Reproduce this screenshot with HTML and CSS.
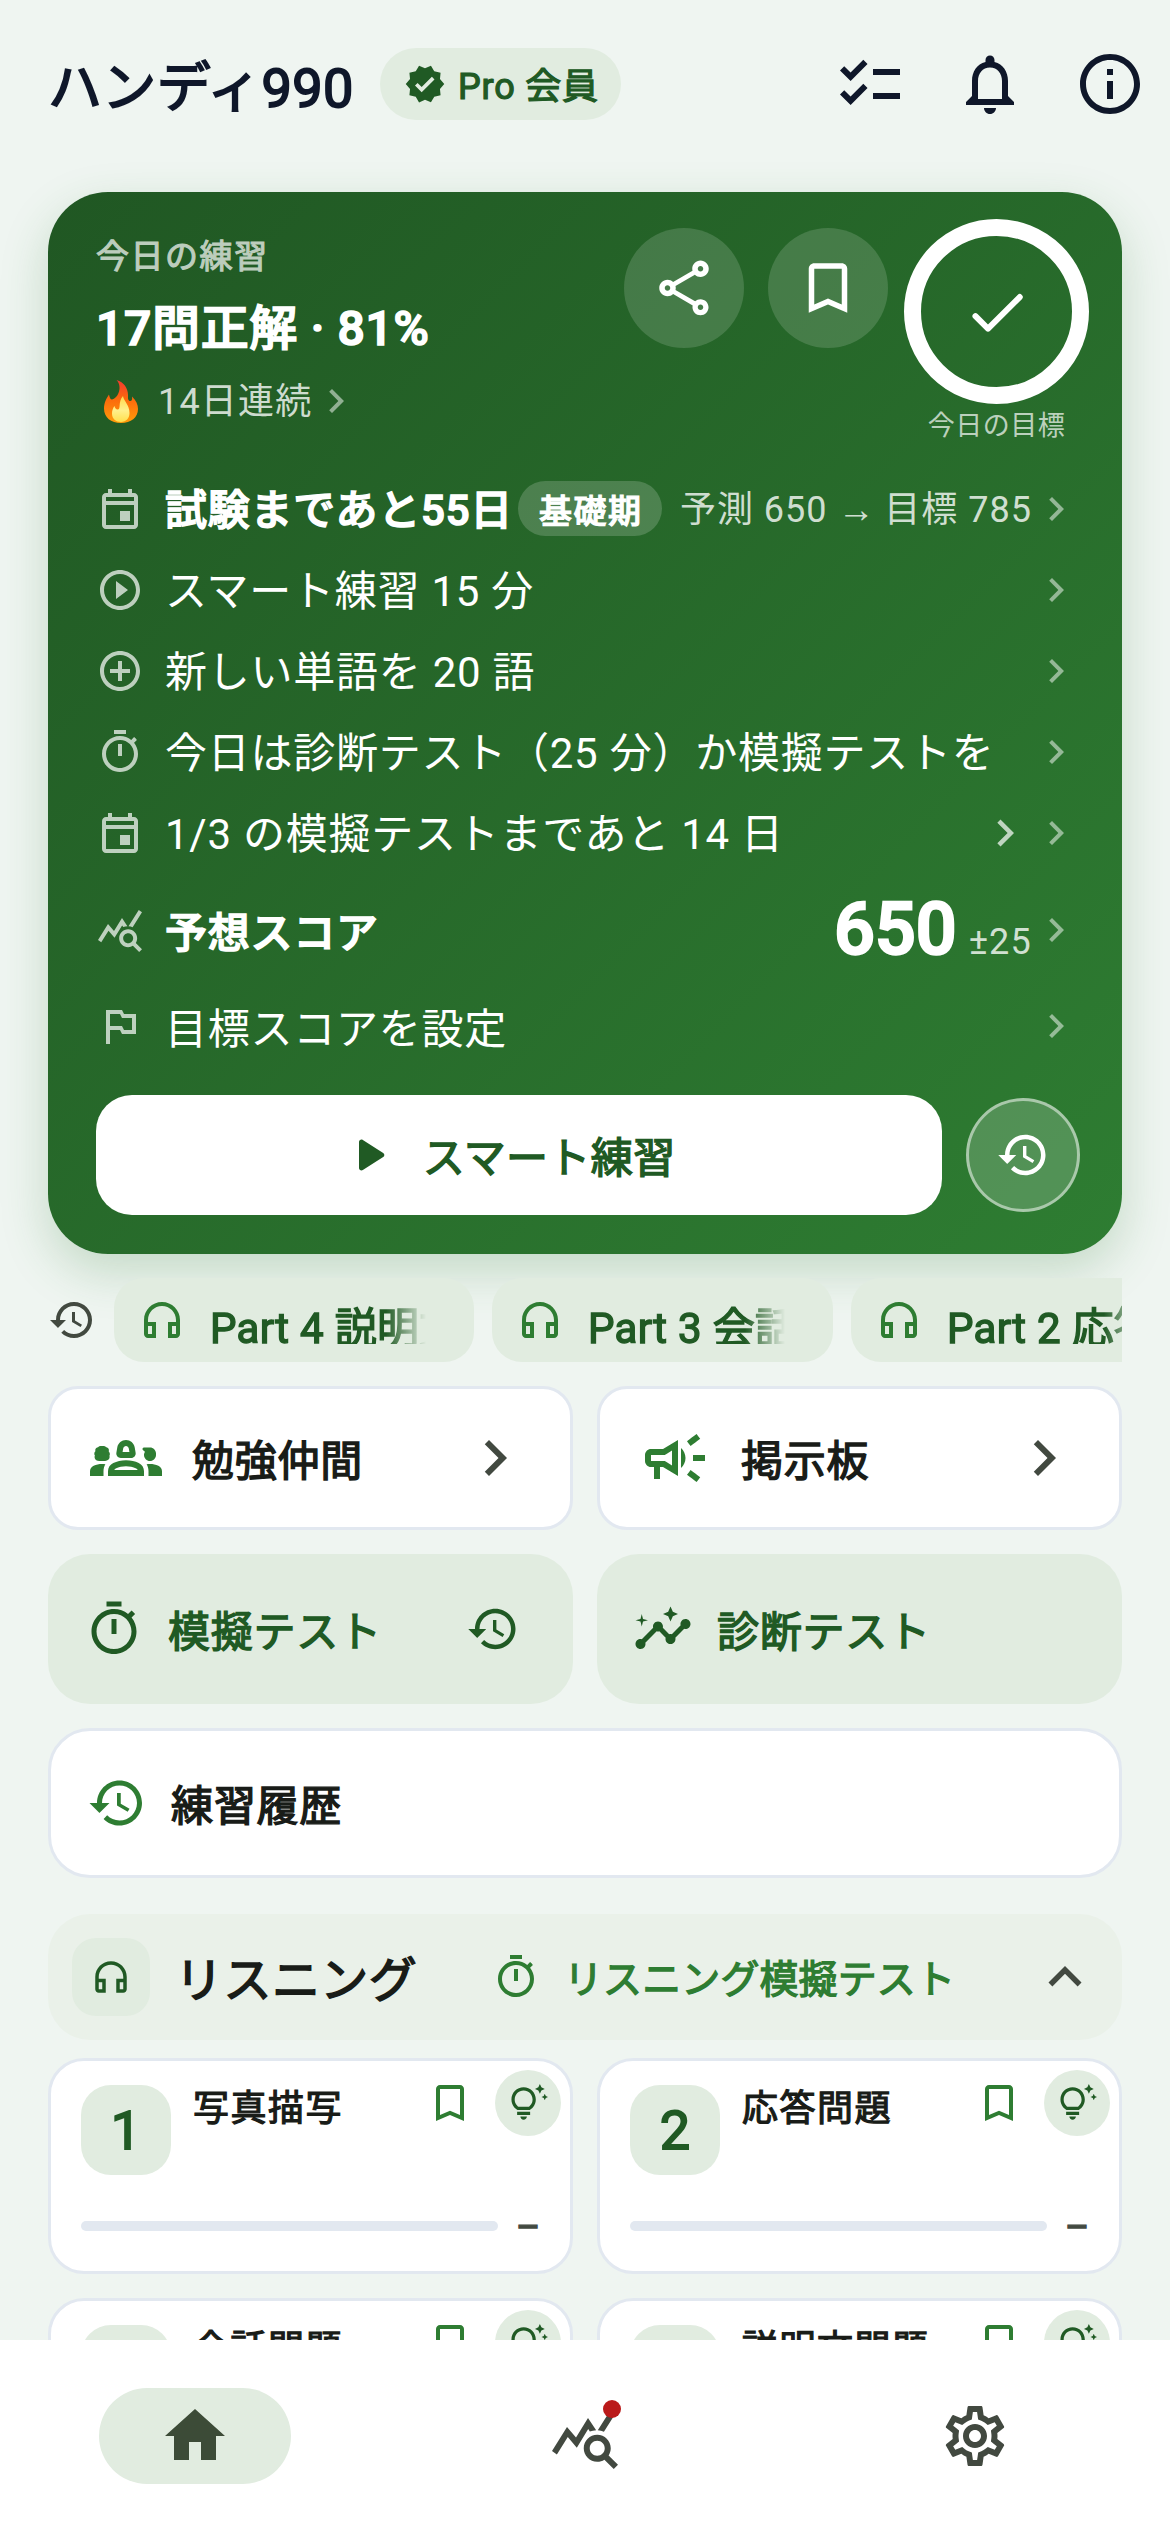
FILE: index.html
```html
<!DOCTYPE html>
<html lang="ja">
<head>
<meta charset="utf-8">
<title>ハンディ990</title>
<link rel="stylesheet" href="styles.css">
</head>
<body>
<svg class="defs" aria-hidden="true">
  <symbol id="chevron" viewBox="0 0 24 24"><path d="M10 6L8.59 7.41 13.17 12l-4.58 4.59L10 18l6-6z"/></symbol>
  <symbol id="up" viewBox="0 0 24 24"><path d="M12 8l-6 6 1.41 1.41L12 10.83l4.59 4.58L18 14z"/></symbol>
  <symbol id="history" viewBox="0 0 24 24"><path d="M13 3c-4.97 0-9 4.03-9 9H1l3.89 3.89.07.14L9 12H6c0-3.87 3.13-7 7-7s7 3.13 7 7-3.13 7-7 7c-1.93 0-3.68-.79-4.94-2.06l-1.42 1.42C8.27 19.99 10.51 21 13 21c4.97 0 9-4.03 9-9s-4.03-9-9-9zm-1 5v5l4.28 2.54.72-1.21-3.5-2.08V8H12z"/></symbol>
  <symbol id="timer" viewBox="0 0 24 24"><path d="M9 1h6v2H9V1zm2 13h2V8h-2v6zm8.03-6.61l1.42-1.42c-.43-.51-.9-.99-1.41-1.41l-1.42 1.42C16.07 4.74 14.12 4 12 4c-4.97 0-9 4.03-9 9s4.02 9 9 9 9-4.03 9-9c0-2.12-.74-4.07-1.97-5.61zM12 20c-3.87 0-7-3.13-7-7s3.13-7 7-7 7 3.13 7 7-3.13 7-7 7z"/></symbol>
  <symbol id="event" viewBox="0 0 24 24"><path d="M19 4h-1V2h-2v2H8V2H6v2H5c-1.11 0-1.99.9-1.99 2L3 20c0 1.1.89 2 2 2h14c1.1 0 2-.9 2-2V6c0-1.1-.9-2-2-2zm0 16H5V10h14v10zm0-12H5V6h14v2zm-7 5h5v5h-5z"/></symbol>
  <symbol id="headphones" viewBox="0 0 24 24"><path d="M12 3c-4.97 0-9 4.03-9 9v7c0 1.1.9 2 2 2h4v-8H5v-1c0-3.87 3.13-7 7-7s7 3.13 7 7v1h-4v8h4c1.1 0 2-.9 2-2v-7c0-4.97-4.03-9-9-9zM7 15v4H5v-4h2zm12 4h-2v-4h2v4z"/></symbol>
  <symbol id="bookmark" viewBox="0 0 24 24"><path d="M17 3H7c-1.1 0-2 .9-2 2v16l7-3 7 3V5c0-1.1-.9-2-2-2zm0 15l-5-2.18L7 18V5h10v13z"/></symbol>
  <symbol id="stats" viewBox="0 0 24 24"><path d="M19.88 18.47c.44-.7.7-1.51.7-2.39 0-2.49-2.01-4.5-4.5-4.5s-4.5 2.01-4.5 4.5 2.01 4.5 4.49 4.5c.88 0 1.7-.26 2.39-.7L21.58 23 23 21.58l-3.12-3.11zm-3.8.11c-1.38 0-2.5-1.12-2.5-2.5s1.12-2.5 2.5-2.5 2.5 1.12 2.5 2.5-1.12 2.5-2.5 2.5zM15.72 10.08c-.74.02-1.45.18-2.1.45l-.55-.83-3.8 6.18-3.01-3.52-3.63 5.81L1 17l5-8 3 3.5L13 6l2.72 4.08zm2.59.5c-.64-.28-1.33-.45-2.05-.49L21.38 2 23 3.18l-4.69 7.4z"/></symbol>
  <symbol id="tips" viewBox="0 0 24 24"><path d="M7 20h4c0 1.1-.9 2-2 2s-2-.9-2-2zm-2-1h8v-2H5v2zm11.500-9.500c0 3.820-2.660 5.860-3.770 6.500H5.270C4.160 15.360 1.500 13.320 1.500 9.500 1.500 5.360 4.860 2 9 2s7.500 3.360 7.500 7.500zm-2 0C14.500 6.470 12.030 4 9 4S3.500 6.470 3.500 9.500c0 2.470 1.490 3.890 2.350 4.500h6.300c.86-.61 2.350-2.030 2.350-4.500zm6.870-2.130L20 8l1.370.63L22 10l.63-1.370L24 8l-1.370-.63L22 6l-.63 1.370zM19 6l.94-2.060L22 3l-2.060-.94L19 0l-.94 2.060L16 3l2.060.94L19 6z"/></symbol>
</svg>

<main class="content">
  <header class="topbar">
    <h1 class="title">ハンディ990</h1>
    <div class="pro">
      <svg class="i42" viewBox="0 0 24 24"><path d="M23 12l-2.44-2.79.34-3.69-3.61-.82-1.89-3.2L12 2.96 8.6 1.5 6.71 4.69 3.1 5.5l.34 3.7L1 12l2.44 2.79-.34 3.7 3.61.82L8.6 22.5l3.4-1.47 3.4 1.46 1.89-3.19 3.61-.82-.34-3.69L23 12zm-12.91 4.72l-3.8-3.81 1.48-1.48 2.32 2.33 5.85-5.87 1.48 1.48-7.33 7.35z"/></svg>
      <span>Pro 会員</span>
    </div>
    <nav class="tools">
      <svg class="i72" viewBox="0 0 24 24"><path d="M22 7h-9v2h9V7zm0 8h-9v2h9v-2zM5.54 11L2 7.46l1.41-1.41 2.12 2.12 4.24-4.24 1.41 1.41L5.54 11zm0 8L2 15.46l1.41-1.41 2.12 2.12 4.24-4.24 1.41 1.41L5.54 19z"/></svg>
      <svg class="i72" viewBox="0 0 24 24"><path d="M12 22c1.1 0 2-.9 2-2h-4c0 1.1.89 2 2 2zm6-6v-5c0-3.07-1.64-5.64-4.5-6.32V4c0-.83-.67-1.5-1.5-1.5s-1.5.67-1.5 1.5v.68C7.63 5.36 6 7.92 6 11v5l-2 2v1h16v-1l-2-2zm-2 1H8v-6c0-2.48 1.51-4.5 4-4.5s4 2.02 4 4.5v6z"/></svg>
      <svg class="i72" viewBox="0 0 24 24"><path d="M11 7h2v2h-2zm0 4h2v6h-2zm1-9C6.48 2 2 6.48 2 12s4.48 10 10 10 10-4.48 10-10S17.52 2 12 2zm0 18c-4.41 0-8-3.59-8-8s3.59-8 8-8 8 3.59 8 8-3.59 8-8 8z"/></svg>
    </nav>
  </header>

  <section class="today">
    <div class="today-top">
      <div class="summary">
        <div class="label">今日の練習</div>
        <div class="result">17問正解 · 81%</div>
        <div class="streak">
          <svg class="flame" viewBox="0 0 34 43">
            <defs>
              <linearGradient id="fo" x1="0" y1="0" x2="0" y2="1"><stop offset="0" stop-color="#f4392f"/><stop offset=".45" stop-color="#fb6a0c"/><stop offset="1" stop-color="#ff9c0a"/></linearGradient>
              <linearGradient id="fi" x1="0" y1="0" x2="0" y2="1"><stop offset="0" stop-color="#ffd84a"/><stop offset=".55" stop-color="#fff08c"/><stop offset="1" stop-color="#ffdf4d"/></linearGradient>
            </defs>
            <path fill="url(#fo)" d="M12.500 0C20 2 24 8.500 24 15c0 3-.3 5 1.500 6 2 .6 3-1 2.500-4.500 4 4 6 8 6 12.500C34 37.500 27 43 17 43S0 37.500 0 28.500C0 23 2.500 18 5 14.500c.5 3 1.500 5 3 5 4-.5 8-7 7.500-12.500C15.300 4 14.500 2 12.500 0z"/>
            <path fill="url(#fi)" d="M19 16c.5 5 6.500 8.500 6.500 17 0 5.500-3.500 9-8.500 9s-9-3-9-8.500c0-3 1-5.500 2.500-7.500.5 2 1.500 3.500 3 3.500C17.500 29.500 13.500 22 19 16z"/>
          </svg>
          <span>14日連続</span>
          <svg class="i48 dim"><use href="#chevron"/></svg>
        </div>
      </div>
      <div class="round"><svg class="i66" viewBox="0 0 24 24"><path d="M18 16.08c-.76 0-1.44.3-1.96.77L8.91 12.7c.05-.23.09-.46.09-.7s-.04-.47-.09-.7l7.05-4.11c.54.5 1.25.81 2.04.81 1.66 0 3-1.34 3-3s-1.34-3-3-3-3 1.34-3 3c0 .24.04.47.09.7L8.04 9.81C7.5 9.31 6.79 9 6 9c-1.66 0-3 1.34-3 3s1.34 3 3 3c.79 0 1.5-.31 2.04-.81l7.12 4.16c-.05.21-.08.43-.08.65 0 1.61 1.31 2.92 2.92 2.92s2.92-1.31 2.92-2.92-1.31-2.92-2.92-2.92zM18 4c.55 0 1 .45 1 1s-.45 1-1 1-1-.45-1-1 .45-1 1-1zM6 13c-.55 0-1-.45-1-1s.45-1 1-1 1 .45 1 1-.45 1-1 1zm12 7.02c-.55 0-1-.45-1-1s.45-1 1-1 1 .45 1 1-.45 1-1 1z"/></svg></div>
      <div class="round"><svg class="i66"><use href="#bookmark"/></svg></div>
      <div class="goal">
        <div class="ring"><svg class="i72" viewBox="0 0 24 24"><path d="M9 16.17L5.53 12.7a.996.996 0 10-1.41 1.41l4.18 4.18c.39.39 1.02.39 1.41 0L20.29 7.71a.996.996 0 10-1.41-1.41L9 16.17z"/></svg></div>
        <div class="goal-label">今日の目標</div>
      </div>
    </div>

    <div class="row">
      <svg class="i48 lead"><use href="#event"/></svg>
      <span class="row-text strong">試験まであと55日</span>
      <span class="badge">基礎期</span>
      <span class="trail">予測 650 <b class="arrow">→</b> 目標 785</span>
      <svg class="i48 dim"><use href="#chevron"/></svg>
    </div>
    <div class="row">
      <svg class="i48 lead" viewBox="0 0 24 24"><path d="M12 2C6.48 2 2 6.48 2 12s4.48 10 10 10 10-4.48 10-10S17.52 2 12 2zm0 18c-4.41 0-8-3.59-8-8s3.59-8 8-8 8 3.59 8 8-3.590 8-8 8zM10 16.500l6-4.500-6-4.500z"/></svg>
      <span class="row-text">スマート練習 15 分</span>
      <svg class="i48 dim end"><use href="#chevron"/></svg>
    </div>
    <div class="row">
      <svg class="i48 lead" viewBox="0 0 24 24"><path d="M13 7h-2v4H7v2h4v4h2v-4h4v-2h-4V7zm-1-5C6.480 2 2 6.480 2 12s4.480 10 10 10 10-4.480 10-10S17.520 2 12 2zm0 18c-4.410 0-8-3.590-8-8s3.590-8 8-8 8 3.590 8 8-3.590 8-8 8z"/></svg>
      <span class="row-text">新しい単語を 20 語</span>
      <svg class="i48 dim end"><use href="#chevron"/></svg>
    </div>
    <div class="row">
      <svg class="i48 lead"><use href="#timer"/></svg>
      <span class="row-text">今日は診断テスト（25 分）か模擬テストを</span>
      <svg class="i48 dim end"><use href="#chevron"/></svg>
    </div>
    <div class="row">
      <svg class="i48 lead"><use href="#event"/></svg>
      <span class="row-text">1/3 の模擬テストまであと 14 日</span>
      <svg class="i54 lead end"><use href="#chevron"/></svg>
      <svg class="i48 dim"><use href="#chevron"/></svg>
    </div>
    <div class="row score-row">
      <svg class="i48 lead"><use href="#stats"/></svg>
      <span class="row-text strong">予想スコア</span>
      <span class="score end">650</span>
      <span class="margin">±25</span>
      <svg class="i48 dim"><use href="#chevron"/></svg>
    </div>
    <div class="row goal-row">
      <svg class="i48 lead" viewBox="0 0 24 24"><path d="M14 6l-1-2H5v17h2v-7h5l1 2h7V6h-6zm4 8h-4l-1-2H7V6h5l1 2h5v6z"/></svg>
      <span class="row-text">目標スコアを設定</span>
      <svg class="i48 dim end"><use href="#chevron"/></svg>
    </div>
    <div class="start">
      <div class="start-btn">
        <svg class="i60" viewBox="0 0 24 24"><path d="M8 6.820v10.360c0 .79.87 1.270 1.540.84l8.140-5.180c.62-.39.62-1.290 0-1.690L9.540 5.980C8.870 5.550 8 6.030 8 6.820z"/></svg>
        <span>スマート練習</span>
      </div>
      <div class="start-history"><svg class="i54"><use href="#history"/></svg></div>
    </div>
  </section>

  <section class="recent">
    <svg class="i48 gray"><use href="#history"/></svg>
    <div class="chips">
      <div class="chip"><svg class="i48"><use href="#headphones"/></svg><span class="wide">Part 4 説明文問題</span></div>
      <div class="chip"><svg class="i48"><use href="#headphones"/></svg><span>Part 3 会話問題</span></div>
      <div class="chip"><svg class="i48"><use href="#headphones"/></svg><span>Part 2 応答問題</span></div>
    </div>
  </section>

  <section class="tiles">
    <div class="tile link">
      <svg class="i72 green" viewBox="0 0 24 24"><path fill-rule="evenodd" d="M10.270 12h3.460c.93 0 1.630-.83 1.480-1.750l-.3-1.790C14.670 7.040 13.440 6 12 6S9.330 7.040 9.090 8.470l-.3 1.790c-.15.91.55 1.740 1.480 1.740zM11.060 8.800c.1-.47.5-.8.94-.8s.84.33.93.800l.210 1.200h-2.280l.2-1.200z"/><path d="M1.660 11.110c-.13.26-.18.57-.1.88.16.69.76 1 1.530 1h1.950c.83 0 1.510-.58 1.510-1.290 0-.14-.03-.27-.07-.4-.01-.03-.01-.05.01-.08.09-.16.14-.34.14-.53 0-.31-.14-.6-.36-.82-.03-.03-.03-.06-.02-.1.07-.2.07-.43.01-.65-.1-.38-.46-.68-.84-.71-.04 0-.07-.02-.09-.05C5.110 8.140 4.860 8 4.570 8H3.500c-.3 0-.58.13-.73.35-.02.03-.05.05-.09.05-.44.02-.83.35-.91.78-.03.17-.02.34.03.49.01.03.01.07-.02.1-.22.21-.35.51-.35.83 0 .16.04.31.11.45.02.02.02.04.120.06z"/><path fill-rule="evenodd" d="M16.240 13.650c-1.170-.52-2.610-.9-4.240-.9s-3.070.39-4.240.9C6.680 14.130 6 15.210 6 16.390V18h12v-1.610c0-1.180-.68-2.260-1.760-2.740zM8.070 16c.09-.23.27-.42.49-.52 1.100-.49 2.260-.73 3.430-.73 1.180 0 2.330.25 3.430.73.23.1.4.29.490.52H8.070z"/><path d="M1.220 14.580C.48 14.900 0 15.620 0 16.430V18h4.500v-1.610c0-.83.23-1.610.63-2.290C4.760 14.040 4.390 14 4 14c-.99 0-1.930.21-2.780.58zM22.780 14.580C21.930 14.210 20.990 14 20 14c-.39 0-.76.04-1.130.1.4.68.63 1.460.63 2.290V18H24v-1.570c0-.81-.48-1.530-1.220-1.850zM22 11v-.5c0-1.100-.9-2-2-2h-2c-.42 0-.65.48-.39.81l.7.63C18.190 10.210 18 10.600 18 11c0 1.100.9 2 2 2s2-.9 2-2z"/></svg>
      <span>勉強仲間</span>
      <svg class="i72 gray end"><use href="#chevron"/></svg>
    </div>
    <div class="tile link">
      <svg class="i72 green" viewBox="0 0 24 24"><path d="M18 11v2h4v-2h-4zM16 17.610c.96.71 2.210 1.650 3.200 2.390.4-.53.8-1.070 1.200-1.600-.99-.74-2.240-1.680-3.200-2.400-.4.54-.8 1.080-1.200 1.610zM20.400 5.600c-.4-.53-.8-1.070-1.200-1.600-.99.74-2.240 1.680-3.200 2.400.4.53.8 1.070 1.200 1.600.96-.72 2.210-1.650 3.200-2.400zM4 9c-1.100 0-2 .9-2 2v2c0 1.100.9 2 2 2h1v4h2v-4h1l5 3V6L8 9H4zm5.030 1.710L11 9.530v4.940l-1.970-1.180-.48-.29H4v-2h4.550l.48-.29zM15.500 12c0-1.330-.58-2.530-1.500-3.350v6.690c.92-.81 1.500-2.010 1.500-3.340z"/></svg>
      <span>掲示板</span>
      <svg class="i72 gray end"><use href="#chevron"/></svg>
    </div>
    <div class="tile tonal">
      <svg class="i60"><use href="#timer"/></svg>
      <span>模擬テスト</span>
      <svg class="i54 end"><use href="#history"/></svg>
    </div>
    <div class="tile tonal">
      <svg class="i60" viewBox="0 0 24 24"><path d="M21 8c-1.450 0-2.260 1.440-1.930 2.510l-3.550 3.560c-.3-.09-.74-.09-1.040 0l-2.550-2.550C12.270 10.450 11.460 9 10 9c-1.450 0-2.270 1.440-1.930 2.520l-4.560 4.550C2.440 15.740 1 16.550 1 18c0 1.100.9 2 2 2 1.450 0 2.260-1.440 1.930-2.510l4.550-4.560c.3.09.74.09 1.040 0l2.550 2.550C12.730 16.550 13.540 18 15 18c1.450 0 2.270-1.440 1.930-2.520l3.560-3.550c1.070.33 2.510-.48 2.510-1.930 0-1.100-.9-2-2-2zM15 9l.94-2.070L18 6l-2.060-.93L15 3l-.92 2.070L12 6l2.080.93L15 9zM3.500 11L4 9l2-.5L4 8l-.5-2L3 8l-2 .5L3 9l.5 2z"/></svg>
      <span>診断テスト</span>
    </div>
    <div class="tile log">
      <svg class="i60 green"><use href="#history"/></svg>
      <span>練習履歴</span>
    </div>
  </section>

  <section class="section-head">
    <div class="section-icon"><svg class="i42"><use href="#headphones"/></svg></div>
    <h2>リスニング</h2>
    <div class="section-test"><svg class="i48"><use href="#timer"/></svg><span>リスニング模擬テスト</span></div>
    <svg class="i66 gray end"><use href="#up"/></svg>
  </section>

  <section class="parts">
    <article class="part">
      <div class="part-top"><div class="num">1</div><h3>写真描写</h3><svg class="i48 green"><use href="#bookmark"/></svg><div class="tip"><svg class="i39"><use href="#tips"/></svg></div></div>
      <div class="progress"><div class="bar"></div><span>–</span></div>
    </article>
    <article class="part">
      <div class="part-top"><div class="num">2</div><h3>応答問題</h3><svg class="i48 green"><use href="#bookmark"/></svg><div class="tip"><svg class="i39"><use href="#tips"/></svg></div></div>
      <div class="progress"><div class="bar"></div><span>–</span></div>
    </article>
    <article class="part">
      <div class="part-top"><div class="num">3</div><h3>会話問題</h3><svg class="i48 green"><use href="#bookmark"/></svg><div class="tip"><svg class="i39"><use href="#tips"/></svg></div></div>
      <div class="progress"><div class="bar"></div><span>–</span></div>
    </article>
    <article class="part">
      <div class="part-top"><div class="num">4</div><h3>説明文問題</h3><svg class="i48 green"><use href="#bookmark"/></svg><div class="tip"><svg class="i39"><use href="#tips"/></svg></div></div>
      <div class="progress"><div class="bar"></div><span>–</span></div>
    </article>
  </section>
</main>

<nav class="bottom">
  <div class="nav-item"><div class="nav-pill active"><svg class="i72" viewBox="0 0 24 24"><path d="M10 20v-6h4v6h5v-8h3L12 3 2 12h3v8z"/></svg></div></div>
  <div class="nav-item"><div class="nav-pill"><svg class="i72"><use href="#stats"/></svg><i class="dot"></i></div></div>
  <div class="nav-item"><div class="nav-pill"><svg class="i72" viewBox="0 0 24 24"><path d="M19.430 12.980c.04-.32.07-.64.07-.98s-.03-.66-.07-.98l2.110-1.650c.19-.15.24-.42.12-.64l-2-3.460c-.09-.16-.26-.25-.44-.25-.06 0-.12.01-.17.03l-2.490 1c-.52-.4-1.080-.73-1.690-.98l-.38-2.650C14.460 2.180 14.250 2 14 2h-4c-.25 0-.46.18-.49.42l-.38 2.650c-.61.25-1.170.59-1.690.98l-2.490-1c-.06-.02-.12-.03-.18-.03-.17 0-.34.09-.43.25l-2 3.460c-.13.22-.07.49.12.64l2.110 1.650c-.04.32-.07.65-.07.98s.03.66.07.98l-2.110 1.650c-.19.15-.24.42-.12.64l2 3.460c.09.16.26.25.44.25.06 0 .12-.01.17-.03l2.490-1c.52.4 1.080.73 1.690.98l.38 2.650c.03.24.24.42.49.42h4c.25 0 .46-.18.49-.42l.38-2.650c.61-.25 1.170-.59 1.690-.98l2.490 1c.06.02.12.03.18.03.17 0 .34-.09.43-.25l2-3.460c.12-.22.07-.49-.12-.64l-2.110-1.650zm-1.980-1.710c.04.31.05.52.05.73 0 .21-.02.43-.05.73l-.14 1.130.89.7 1.080.84-.7 1.210-1.270-.51-1.040-.42-.9.68c-.43.32-.84.56-1.250.73l-1.060.43-.16 1.130-.2 1.350h-1.400l-.19-1.350-.16-1.130-1.060-.43c-.43-.18-.83-.41-1.230-.71l-.91-.7-1.060.43-1.270.51-.7-1.210 1.080-.84.89-.7-.14-1.130c-.03-.31-.05-.54-.05-.74s.02-.43.05-.73l.14-1.130-.89-.7-1.080-.84.7-1.210 1.270.51 1.040.42.9-.68c.43-.32.84-.56 1.250-.73l1.060-.43.16-1.130.2-1.350h1.390l.19 1.350.16 1.130 1.060.43c.43.18.83.41 1.230.71l.91.7 1.060-.43 1.270-.51.7 1.210-1.070.85-.89.7.14 1.130zM12 8c-2.210 0-4 1.790-4 4s1.790 4 4 4 4-1.790 4-4-1.790-4-4-4zm0 6c-1.100 0-2-.9-2-2s.9-2 2-2 2 .9 2 2-.9 2-2 2z"/></svg></div></div>
</nav>
</body>
</html>
```
FILE: styles.css
```css
* { box-sizing: border-box; }

html, body { margin: 0; }

body {
  display: flex;
  flex-direction: column;
  width: 1170px;
  height: 2532px;
  overflow: hidden;
  background: #eff5f1;
  color: #191c18;
  font-family: Roboto, "Noto Sans CJK JP", sans-serif;
  font-size: 42px;
  line-height: 1;
}

h1, h2, h3 { margin: 0; font-weight: 400; }
span, h1, h2, h3 { white-space: nowrap; }

/* emphasis is a thickened regular face */
.title, .pro span, .label, .result, .strong, .badge, .score, .start-btn span,
.chip span, .tile span, .section-head h2, .section-test span, .num, .part h3,
.progress span { -webkit-text-stroke: .034em currentColor; }
.result, .strong, .badge, .score { font-weight: 500; }

svg { display: block; flex: none; fill: currentColor; }
.defs { display: none; }

.i39 { width: 39px; height: 39px; }
.i42 { width: 42px; height: 42px; }
.i48 { width: 48px; height: 48px; }
.i54 { width: 54px; height: 54px; }
.i60 { width: 60px; height: 60px; }
.i66 { width: 66px; height: 66px; }
.i72 { width: 72px; height: 72px; }
.green { color: #2e7d32; }
.gray { color: #424940; }
.end { margin-left: auto; }

.content { flex: 1; min-height: 0; overflow: hidden; padding: 0 48px; }

/* top bar */
.topbar { display: flex; align-items: center; height: 168px; margin-right: -24px; color: #0f172a; }
.title { width: 332px; padding-top: 9px; font-size: 54px; letter-spacing: .35px; }
.pro {
  display: flex;
  align-items: center;
  gap: 12px;
  height: 72px;
  padding: 0 22px 0 24px;
  border-radius: 36px;
  background: #e1ece0;
  color: #205a24;
  font-size: 36px;
  letter-spacing: .8px;
}
.pro span { padding-top: 5px; }
.tools { display: flex; gap: 48px; margin-left: auto; }

/* today card */
.today {
  height: 1062px;
  margin-top: 24px;
  padding: 0 42px 0 48px;
  border-radius: 60px;
  background: linear-gradient(135deg, #205723, #2e7d32);
  box-shadow: 0 18px 48px rgba(46, 125, 50, .22);
  color: #fff;
}
.today-top { display: flex; align-items: flex-start; height: 276px; padding-top: 38px; }
.summary { width: 528px; flex: none; }
.label { font-size: 33px; line-height: 53px; letter-spacing: 1.5px; color: rgb(188, 205, 189); }
.result { font-size: 48px; line-height: 92px; letter-spacing: .7px; }
.streak { display: flex; align-items: center; height: 52px; font-size: 36px; letter-spacing: 1.2px; color: rgba(255, 255, 255, .8); }
.streak span { padding-top: 2px; }
.flame { width: 34px; height: 43px; margin: 0 20px 0 8px; }
.dim { color: rgba(255, 255, 255, .5); }
.lead { color: rgba(255, 255, 255, .7); }
.round {
  flex: none;
  display: grid;
  place-items: center;
  width: 120px;
  height: 120px;
  margin: -2px 24px 0 0;
  border-radius: 50%;
  background: rgba(255, 255, 255, .15);
}
.goal { flex: none; width: 185px; margin: -11px 0 0 -8px; text-align: center; }
.ring {
  display: grid;
  place-items: center;
  width: 185px;
  height: 185px;
  border: 17px solid #fff;
  border-radius: 50%;
}
.goal-label { font-size: 27px; line-height: 45px; letter-spacing: .5px; color: rgba(255, 255, 255, .7); }

.row { display: flex; align-items: center; height: 81px; }
.row-text { margin-left: 21px; padding-top: 4px; letter-spacing: .75px; }
.score-row .row-text, .goal-row .row-text { padding-top: 8px; }
.badge {
  margin-left: 5px;
  padding: 6px 20px 0 21px;
  border-radius: 28px;
  background: rgba(255, 255, 255, .18);
  font-size: 33px;
  line-height: 49px;
  letter-spacing: 1.4px;
}
.trail { margin-left: auto; padding-top: 3px; font-size: 36px; letter-spacing: 1px; color: rgba(255, 255, 255, .8); }
.arrow { display: inline-block; width: 37px; font: 400 37px/36px "Liberation Sans", sans-serif; letter-spacing: 0; text-align: center; }
.score-row { height: 114px; }
.goal-row { height: 78px; }
.score { padding-bottom: 1px; font-size: 72px; }
.margin { align-self: flex-end; margin: 0 0 27px 12px; font-size: 36px; letter-spacing: 1.2px; color: rgba(255, 255, 255, .8); }

.start { display: flex; align-items: center; gap: 24px; margin-top: 30px; }
.start-btn {
  flex: 1;
  display: flex;
  align-items: center;
  justify-content: center;
  gap: 24px;
  height: 120px;
  padding: 0 72px 0 48px;
  border-radius: 36px;
  background: #fff;
  color: #205a24;
  letter-spacing: .3px;
}
.start-btn span { padding-top: 7px; }
.start-history {
  display: grid;
  place-items: center;
  width: 114px;
  height: 114px;
  border: 3px solid rgba(255, 255, 255, .5);
  border-radius: 50%;
  background: rgba(255, 255, 255, .18);
}

/* recent chips */
.recent { display: flex; align-items: center; gap: 18px; margin-top: 24px; }
.chips { flex: 1; min-width: 0; display: flex; gap: 18px; overflow: hidden; }
.chip {
  flex: none;
  display: flex;
  align-items: center;
  gap: 24px;
  height: 84px;
  padding: 0 48px 0 24px;
  border-radius: 30px;
  background: #e1ece0;
  color: #2e7d32;
}
.chip span {
  width: 197px;
  height: 48px;
  overflow: hidden;
  line-height: 66px;
  letter-spacing: .3px;
  color: #205a24;
  -webkit-mask-image: linear-gradient(90deg, #000 calc(100% - 40px), transparent);
  mask-image: linear-gradient(90deg, #000 calc(100% - 40px), transparent);
}
.chip .wide { width: 216px; }

/* shortcuts */
.tiles { display: grid; grid-template-columns: 1fr 1fr; gap: 24px; margin-top: 24px; }
.tile { display: flex; align-items: center; height: 150px; letter-spacing: .75px; }
.tile span { padding-top: 7px; }
.link { height: 144px; padding: 0 39px; border: 3px solid #e2e8f0; border-radius: 30px; background: #fff; }
.link span { margin-left: 30px; }
.tonal { gap: 24px; padding: 0 53px 0 36px; border-radius: 42px; background: #e1ece0; color: #205a24; }
.log { grid-column: span 2; gap: 24px; padding: 0 36px; border: 3px solid #e2e8f0; border-radius: 42px; background: #fff; }

/* listening section */
.section-head {
  display: flex;
  align-items: center;
  height: 126px;
  margin-top: 36px;
  padding: 0 24px;
  border-radius: 42px;
  background: #eaf1e9;
}
.section-icon { display: grid; place-items: center; width: 78px; height: 78px; border-radius: 24px; background: #e1ece0; color: #205a24; }
.section-head h2 { width: 318px; margin-left: 25px; padding-top: 7px; font-size: 48px; letter-spacing: .45px; }
.section-test { display: flex; align-items: center; gap: 24px; margin-left: -1px; font-size: 39px; letter-spacing: .1px; color: #2e7d32; }
.section-test span { padding-top: 7px; }

.parts { display: grid; grid-template-columns: 1fr 1fr; gap: 24px; margin-top: 18px; }
.part { height: 216px; padding: 24px 30px; border: 3px solid #e2e8f0; border-radius: 36px; background: #fff; }
.part-top { display: flex; align-items: flex-start; height: 130px; margin-right: -21px; }
.num { width: 90px; height: 90px; border-radius: 30px; background: #e1ece0; color: #205a24; font-size: 54px; line-height: 91px; text-align: center; }
.part h3 { flex: 1; margin-left: 22px; font-size: 36px; line-height: 48px; letter-spacing: 1.5px; }
.part-top > svg { margin: -6px 21px 0 0; }
.tip { display: grid; place-items: center; width: 66px; height: 66px; margin-top: -15px; border-radius: 50%; background: #e1ece0; color: #205a24; }
.progress { display: flex; align-items: center; gap: 18px; color: #424940; }
.bar { flex: 1; height: 10px; border-radius: 5px; background: #e2e8f0; }
.progress span { width: 24px; padding-top: 4px; font-size: 37px; line-height: 18px; }

/* bottom navigation */
.bottom { display: grid; grid-template-columns: repeat(3, 1fr); align-items: center; height: 192px; background: #fff; color: #424940; }
.nav-item { display: grid; place-items: center; }
.nav-pill { position: relative; display: grid; place-items: center; width: 192px; height: 96px; border-radius: 48px; }
.active { background: #e1ece0; color: #3c4b37; }
.dot { position: absolute; left: 114px; top: 12px; width: 18px; height: 18px; border-radius: 50%; background: #ba1a1a; }
```
